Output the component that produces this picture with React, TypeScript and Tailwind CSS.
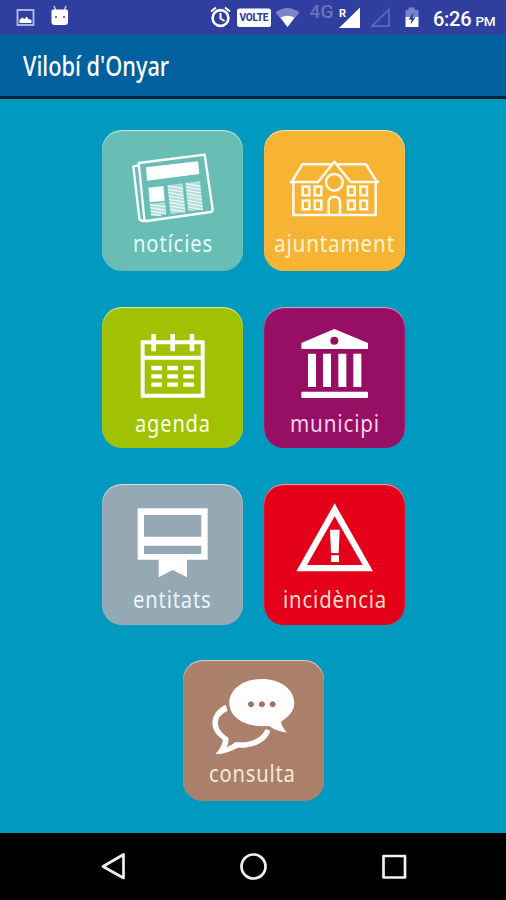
import { useLayoutEffect, useRef, type ReactNode } from "react";

/** A single line of text, condensed or widened to an exact width. */
function FitText({ width, className, children }: { width: number; className: string; children: string }) {
  const ref = useRef<HTMLSpanElement>(null);
  useLayoutEffect(() => {
    const fit = () => {
      const el = ref.current;
      if (el) el.style.transform = `scaleX(${width / el.offsetWidth})`;
    };
    fit();
    document.fonts.ready.then(fit);
  }, [width]);
  return (
    <span ref={ref} className={`inline-block origin-left whitespace-nowrap ${className}`}>
      {children}
    </span>
  );
}

type TileProps = {
  label: string;
  width: number;
  color: string;
  textColor: string;
  pad: string;
  viewBox: string;
  children: ReactNode;
};

function Tile({ label, width, color, textColor, pad, viewBox, children }: TileProps) {
  return (
    <button
      className={`flex h-[141px] w-[141px] shrink-0 flex-col items-center rounded-[20px] shadow-[inset_0_1px_1px_rgba(255,255,255,0.65)] ${color}`}
    >
      <svg className="block h-24 w-[141px] shrink-0" viewBox={viewBox} fill="none">
        {children}
      </svg>
      <span className={`flex justify-start ${pad}`} style={{ width }}>
        <FitText
          width={width}
          className={`font-['Noto_Sans','Open_Sans',sans-serif] text-[24px] leading-[32px] font-normal tracking-[1px] ${textColor}`}
        >
          {label}
        </FitText>
      </span>
    </button>
  );
}

function StatusBar() {
  return (
    <div className="flex h-[34px] shrink-0 items-center bg-[#303f9f] font-[Roboto,sans-serif] text-white">
      <svg className="h-[34px] w-[506px]" viewBox="0 0 506 34" fill="none">
        <rect x="17.5" y="10" width="16" height="15" stroke="#b9bfe8" strokeWidth="1.8" />
        <path d="M19.500 23V20l2.500-2.500 2.500 1.500 2-2.500 2 2.500 3 1v3z" fill="#fff" />
        <path d="M54 6l2 5M66 6l-2 5" stroke="#c5caef" strokeWidth="1.5" />
        <path d="M51.500 11q0-1.500 1.500-1.500h13.500q1.500 0 1.500 1.500v11q0 3-3 3H54.500q-3 0-3-3z" fill="#fff" />
        <circle cx="56" cy="17" r="1" fill="#303f9f" />
        <circle cx="64" cy="17" r="1" fill="#303f9f" />
        <circle cx="220.500" cy="18" r="7.900" stroke="#fff" strokeWidth="2.600" />
        <path d="M220.500 13v5.500l4 2.500M211 11.500l5-4M230 11.500l-5-4" stroke="#fff" strokeWidth="2" />
        <rect x="237" y="8.500" width="34" height="18.500" rx="2.500" fill="#fff" />
        <text x="239.500" y="21.200" fill="#303f9f" fontSize="10.200" fontWeight="800" fontFamily="Roboto" textLength="29">VOLTE</text>
        <path d="M275.500 12.500Q287.500 3.500 299.500 12.500L287.500 27z" fill="#7d86c8" />
        <path d="M280.500 17.500Q287.500 14 294.500 17.500L287.500 27z" fill="#fff" />
        <text x="309.500" y="18" fill="#6873bd" fontSize="18" fontWeight="500" fontFamily="Roboto" textLength="24" lengthAdjust="spacingAndGlyphs">4G</text>
        <text x="339" y="17" fill="#fff" fontSize="11" fontWeight="700" fontFamily="Roboto">R</text>
        <path d="M339 28L360 7.500V28z" fill="#fff" />
        <path d="M372 26.200L389 9.500v16.700z" stroke="#5c68b8" strokeWidth="1.800" />
        <path d="M405.500 10h3V7.500h6V10h4v8h-13z" fill="#7a83c6" />
        <path d="M405.500 17h13v10h-13z" fill="#fff" />
        <path d="M413.500 12l-5 7.500h3l-1 5 5-7h-3z" fill="#303f9f" />
        <text x="433" y="25.500" fill="#fff" fontSize="20" fontWeight="500" fontFamily="Roboto" textLength="38.500">6:26</text>
        <text x="475.500" y="25.500" fill="#fff" fontSize="13.500" fontWeight="500" fontFamily="Roboto" textLength="20">PM</text>
      </svg>
    </div>
  );
}

const windows = [
  [134, 191],
  [170, 191],
  [270, 191],
  [307, 191],
  [134, 233],
  [170, 233],
  [270, 233],
  [307, 233],
];

export default function App() {
  return (
    <div className="flex h-[900px] w-[506px] flex-col overflow-hidden bg-[#0099bf]">
      <StatusBar />
      <header className="flex h-[65px] shrink-0 items-start border-b-[3px] border-[#062338] bg-[#00619e] pt-[12px] pl-[23px]">
        <FitText width={146} className="font-['Noto_Sans','Open_Sans',sans-serif] text-[27px] leading-[40px] font-medium text-white">
          Vilobí d'Onyar
        </FitText>
      </header>

      <main className="flex h-[734px] shrink-0 flex-col pt-[31px]">
        <div className="flex h-[177px] gap-[21px] pl-[102px]">
          <Tile label="notícies" width={80} color="bg-[#68beb4]" textColor="text-[#e8fbfa]" pad="pt-[1px]" viewBox="21 24 423 288">
            <g stroke="#fff" strokeWidth="7" strokeLinejoin="round">
              <path d="M131 123L329 98L353 263Q353 269 347 270L155 297Q149 297 148 291z" />
              <path d="M130 131L115 133L133 289Q136 298 149 297" />
            </g>
            <path d="M153 136L309 118L313 156L156 176zM160 197L205 192L209 236L164 241z" fill="#fff" />
            <path d="M165 246L210 240L214 277L169 282zM217 190L263 184L271 270L227 276zM271 183L315 177L324 263L280 268z" fill="#b4dfd9" />
            <g stroke="#effafa" strokeWidth="3.500">
              <path d="M165 247l46 8M166 257l46 8M167 267l46 8M168 277l30 4" />
              <path d="M218 192l45 8M219 202l45 8M220 212l45 8M221 222l45 8M222 232l46 8M223 242l46 8M224 252l46 8M225 262l46 8" />
              <path d="M272 185l44 8M273 195l44 8M274 205l44 8M275 215l44 8M276 225l45 8M277 235l45 8M278 245l45 8M279 255l45 8" />
            </g>
          </Tile>
          <Tile label="ajuntament" width={121} color="bg-[#f7b334]" textColor="text-[#fff3d2]" pad="pt-[1px]" viewBox="21 24 423 288">
            <g stroke="#fffaf0" strokeWidth="7.500">
              <path d="M109 183V279H356V183M98 180H183L232 119L281 180H366M104 180L136 127H224M240 127H327L360 180" strokeLinejoin="round" />
              <circle cx="232" cy="181" r="25" />
              <path d="M215 279V242Q215 224 232 224Q249 224 249 242V279" />
              {windows.map(([x, y]) => (
                <rect key={`${x}-${y}`} x={x + 3} y={y + 3} width="20" height="26" />
              ))}
            </g>
          </Tile>
        </div>

        <div className="flex h-[177px] gap-[21px] pl-[102px]">
          <Tile label="agenda" width={76} color="bg-[#a1c203]" textColor="text-[#fbffe5]" pad="pt-[4px]" viewBox="21 21 423 288">
            <path d="M143 127H323V287H143zM138 173H328" stroke="#fff" strokeWidth="12" />
            <path d="M176 102V154M233 102V154M291 102V154" stroke="#fff" strokeWidth="14" />
            <path d="M169 204H201M217 204H249M265 204H297M169 229H201M217 229H249M265 229H297M169 254H201M217 254H249M265 254H297" stroke="#fff" strokeWidth="13" />
          </Tile>
          <Tile label="municipi" width={90} color="bg-[#970f65]" textColor="text-[#f5d3ea]" pad="pt-[4px]" viewBox="21 21 423 288">
            <path d="M232 87L333 129V147H133V129z" fill="#fff" />
            <circle cx="232" cy="122" r="12" fill="#970f65" />
            <path d="M153 161h24v100h-24zM198 161h24v100h-24zM244 161h24v100h-24zM289 161h24v100h-24z" fill="#fff" />
            <rect x="133" y="275" width="200" height="19" rx="3" fill="#fff" />
          </Tile>
        </div>

        <div className="flex h-[176px] gap-[21px] pl-[102px]">
          <Tile label="entitats" width={79} color="bg-[#94a9b3]" textColor="text-[#e9f6ff]" pad="pt-[3px]" viewBox="21 24 423 288">
            <path
              fillRule="evenodd"
              d="M128 97H338V251H276V304L233 282L191 304V251H128zM147 117V182H319V117zM147 209V234H319V209z"
              fill="#fff"
            />
          </Tile>
          <Tile label="incidència" width={104} color="bg-[#e50019]" textColor="text-[#ffdccb]" pad="pt-[3px]" viewBox="21 24 423 288">
            <path fillRule="evenodd" d="M233 82L348 286H118zM233 121L150 267H317z" fill="#fff" />
            <path d="M219 161H248L245 231H222zM222 238H246V258H222z" fill="#fff" />
          </Tile>
        </div>

        <div className="flex pl-[183px]">
          <Tile label="consulta" width={87} color="bg-[#aa806b]" textColor="text-[#fbe6d9]" pad="pt-[1px] -ml-[2px]" viewBox="24 24 423 288">
            <path
              d="M260 81C316 81 358 112 358 153C358 176 341 195 318 209Q322 227 336 242Q306 239 282 222C214 228 163 198 163 153C163 112 205 81 260 81z"
              fill="#fff"
            />
            <path d="M228 148a9 9 0 1 1-.1 0zM261 148a9 9 0 1 1-.1 0zM293 148a9 9 0 1 1-.1 0z" fill="#aa705d" />
            <path
              d="M152 158C108 178 98 224 134 256Q141 260 144 266Q138 288 121 307Q160 304 188 287C230 290 277 272 286 236L272 231C259 259 226 275 182 270Q169 280 155 286Q162 272 160 257C118 231 119 194 158 176z"
              fill="#fff"
            />
          </Tile>
        </div>
      </main>

      <nav className="flex h-[67px] shrink-0 items-start bg-black">
        <svg className="h-[67px] w-[506px]" viewBox="0 0 506 67" fill="none" stroke="#f0f0f0" strokeWidth="2.700" strokeLinejoin="round">
          <path d="M103 33.500L123.500 21.500V45z" />
          <circle cx="253.500" cy="33.500" r="12" />
          <rect x="383.500" y="23" width="21.500" height="21.500" />
        </svg>
      </nav>
    </div>
  );
}
